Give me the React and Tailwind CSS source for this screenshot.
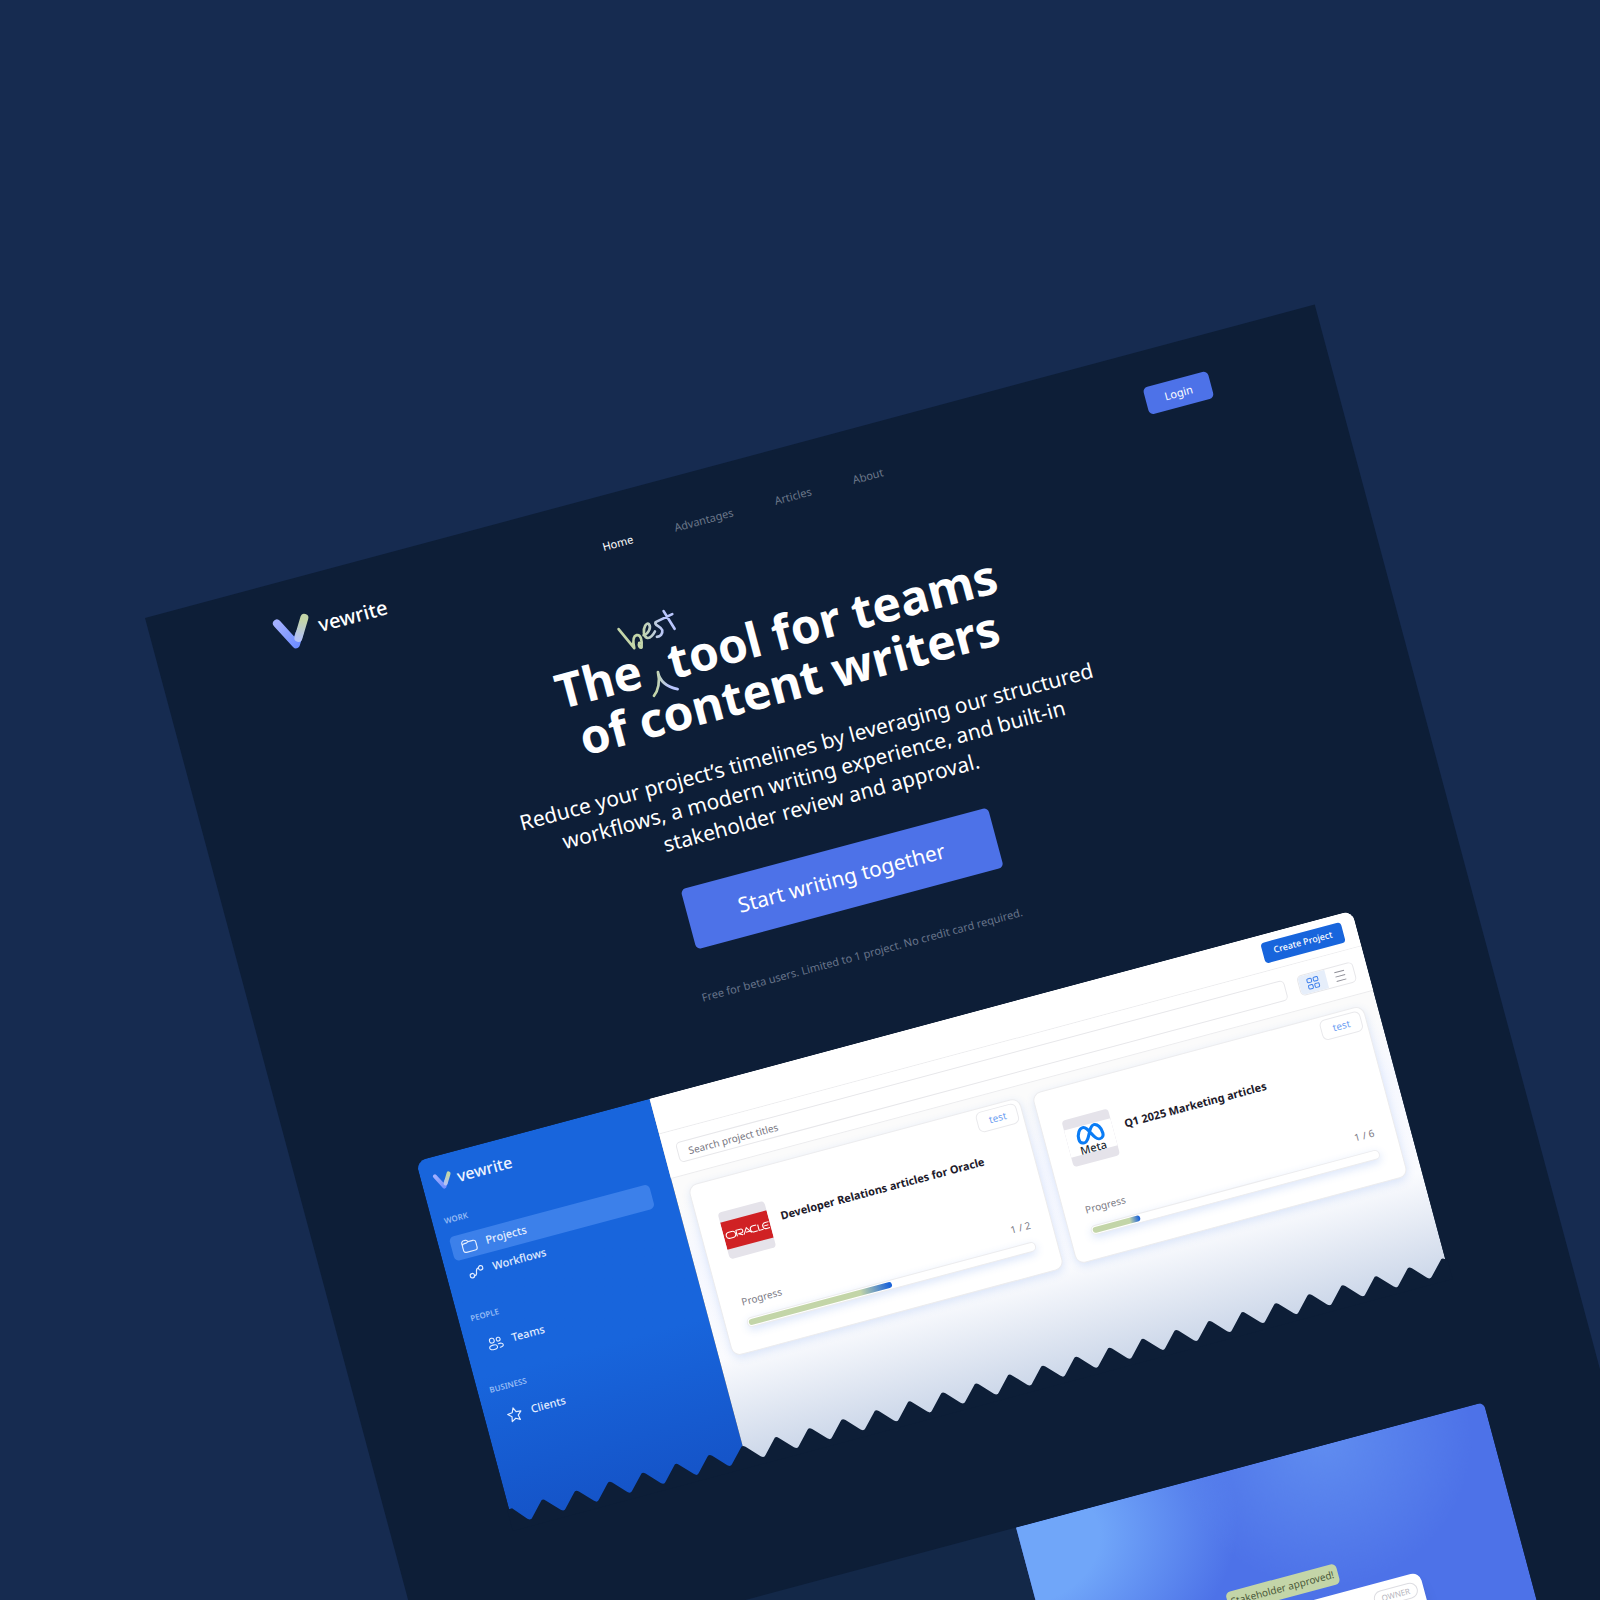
import React from "react";

function VMark({ className }) {
  return (
    <svg viewBox="0 0 38 34" className={className} aria-hidden="true" fill="none">
      <defs>
        <linearGradient id="vleft" x1="5" y1="4" x2="22" y2="32" gradientUnits="userSpaceOnUse">
          <stop offset="0" stopColor="#a3b0ff" />
          <stop offset="1" stopColor="#6b8bff" />
        </linearGradient>
        <linearGradient id="vright" x1="33" y1="4" x2="23" y2="25" gradientUnits="userSpaceOnUse">
          <stop offset="0.2" stopColor="#c3d5a8" />
          <stop offset="1" stopColor="#b4c2f2" />
        </linearGradient>
      </defs>
      <path d="M5 4.500L18 29.500L24 20" stroke="url(#vleft)" strokeWidth="8" strokeLinecap="round" strokeLinejoin="round" />
      <path d="M33 6L22 24" stroke="url(#vright)" strokeWidth="8" strokeLinecap="round" />
    </svg>
  );
}

function BestNote() {
  return (
    <svg viewBox="446 122 70 90" className="absolute -top-[74px] -left-[30px] h-[90px] w-[70px] max-w-none" fill="none" role="img" aria-label="best">
      <defs>
        <linearGradient id="ink" x1="60" y1="0" x2="165" y2="0" gradientUnits="userSpaceOnUse">
          <stop offset="0.3" stopColor="#c3d5a8" />
          <stop offset="0.95" stopColor="#b9c6fd" />
        </linearGradient>
        <linearGradient id="caret" x1="130" y1="0" x2="180" y2="0" gradientUnits="userSpaceOnUse">
          <stop offset="0.1" stopColor="#c3d5a8" />
          <stop offset="0.9" stopColor="#b9c6fd" />
        </linearGradient>
      </defs>
      <g transform="rotate(15) translate(464 -16) scale(0.3333)" strokeWidth="8" strokeLinecap="round" strokeLinejoin="round">
        <path stroke="url(#ink)" d="M23 83L70 140C66 122 66 104 77 101C90 98 94 118 92 138C86 140 82 132 85 124M98 101C112 98 122 78 114 68C106 62 97 78 99 94C101 110 112 114 122 104C128 98 130 94 132 90M184 38L134 62C128 72 150 74 154 86C156 98 148 106 138 106M158 29L191 82" />
        <path stroke="url(#caret)" d="M129 283C142 268 148 240 141 212C146 236 166 256 200 263" />
      </g>
    </svg>
  );
}

const icon = "size-4 shrink-0";
const FolderIcon = () => (
  <svg viewBox="0 0 16 16" className={icon} fill="none" stroke="currentColor" strokeWidth="1.200" strokeLinejoin="round" strokeLinecap="round" aria-hidden="true">
    <path d="M1 4.500A2.500 2.500 0 0 1 3.500 2H5.200C6 2 6.600 2.300 7 3L7.600 4H12.500A2.500 2.500 0 0 1 15 6.500V11.500A2.500 2.500 0 0 1 12.500 14H3.500A2.500 2.500 0 0 1 1 11.500ZM1 6.500C1.500 5.500 2.500 5 3.500 5H5.500L7.600 4" />
  </svg>
);
const FlowIcon = () => (
  <svg viewBox="0 0 16 16" className={icon} fill="none" stroke="currentColor" strokeWidth="1.200" strokeLinecap="round" aria-hidden="true">
    <circle cx="3" cy="11" r="2.200" />
    <circle cx="13" cy="5.500" r="2.200" />
    <path d="M5.300 11.500C8 11.800 7.500 10 8 8.200C8.400 6.500 8.500 5 10.700 5.300" />
  </svg>
);
const TeamIcon = () => (
  <svg viewBox="0 0 16 16" className={icon} fill="none" stroke="currentColor" strokeWidth="1.100" strokeLinecap="round" strokeLinejoin="round" aria-hidden="true">
    <circle cx="5" cy="4.800" r="2.400" />
    <circle cx="11.500" cy="5" r="1.900" />
    <ellipse cx="5" cy="11.700" rx="4" ry="2.300" />
    <path d="M10.500 9.500C13 9 15 10 15 11.500C15 12.800 13.500 13.500 11.500 13.400" />
  </svg>
);
const StarIcon = () => (
  <svg viewBox="0 0 16 16" className={icon} fill="none" stroke="currentColor" strokeWidth="1.200" strokeLinejoin="round" aria-hidden="true">
    <path d="M8 1.300L10 5.700L14.800 6.200L11.200 9.500L12.200 14.300L8 11.900L3.800 14.300L4.800 9.500L1.200 6.200L6 5.700Z" />
  </svg>
);

function NavItem({ label, Icon, active }) {
  return (
    <a href="#" className={`flex h-[25px] items-center gap-[9px] rounded-[5px] pl-[10px] text-[11px] font-medium text-[#e3edff] ${active ? "bg-[#3c80ea]" : ""}`}>
      <Icon />
      {label}
    </a>
  );
}

function NavGroup({ title, items }) {
  return (
    <section>
      <h2 className="text-[8px] leading-[12px] font-semibold text-[#95bbf5]">{title}</h2>
      <div className="mt-[11px] flex flex-col gap-[2px]">
        {items.map((i) => (
          <NavItem key={i.label} {...i} />
        ))}
      </div>
    </section>
  );
}

function OracleLogo() {
  return (
    <div className="flex h-7 w-full items-center justify-center bg-[#d02124]">
      <svg viewBox="0 0 48 10" preserveAspectRatio="none" className="h-[9px] w-[47px]" fill="none" stroke="#fff" strokeWidth="1.100" role="img" aria-label="Oracle">
        <path d="M5 1.600H8A3.400 3.400 0 0 1 8 8.400H5A3.400 3.400 0 0 1 5 1.600ZM12.500 8.400V1.600H17A2 2 0 0 1 17 6H14L18.500 8.400M19.500 8.400L23.500 1.600L27.500 8.400M22 6.500H26M34 1.600H30.500A3.400 3.400 0 0 0 30.500 8.400H34M35.500 1.600V8.400H40M47 1.600H43.500A3.400 3.400 0 0 0 43.500 8.400H47M41 5H46" />
      </svg>
    </div>
  );
}

function MetaLogo() {
  return (
    <div className="flex h-7 w-full flex-col items-center bg-white">
      <svg viewBox="0 0 28 20" preserveAspectRatio="none" className="h-[19px] w-[29px] shrink-0" fill="none" aria-hidden="true">
        <path d="M2 13C2 7 5 2 8.500 2C14 2 16 18 21.500 18C24.500 18 26 16 26 13C26 7 23 2 19.500 2C14 2 12 18 6.500 18C3.500 18 2 16 2 13Z" stroke="#0a7cf5" strokeWidth="3" />
      </svg>
      <span className="text-[11px] leading-[9px] font-medium text-[#1c2b33]">Meta</span>
    </div>
  );
}

function ProjectCard({ logo, title, done, total }) {
  return (
    <article className="relative rounded-[9px] border border-[#ececee] bg-white px-[21px] pt-[33px] pb-[23px] shadow-[0_3px_8px_rgba(70,125,230,0.18)]">
      <span className="absolute top-[3px] right-[4px] rounded-[6px] border border-[#e9e9ec] px-[11px] py-px text-[10px] leading-[17px] text-[#6f9ff2]">test</span>
      <div className="flex gap-3">
        <div className="flex size-12 shrink-0 items-center overflow-hidden rounded-[4px] bg-[#e5e3ea]">{logo}</div>
        <h3 className="pt-[11px] text-[11px] leading-[16px] font-bold text-[#1d1a2b]">{title}</h3>
      </div>
      <div className="mt-[37px] flex justify-between text-[10px] leading-[15px] text-[#7b7a85]">
        <span>Progress</span>
        <span>{done} / {total}</span>
      </div>
      <div className="mt-[9px] h-[10px] rounded-full border border-[#ececee] bg-white p-px shadow-[0_3px_8px_rgba(70,125,230,0.2)]">
        <div
          className="h-full rounded-full bg-[linear-gradient(90deg,#c3d5a8_78%,#1c64d9_98%)]"
          style={{ width: `${(done / total) * 100}%` }}
        />
      </div>
    </article>
  );
}

const TEETH = 28;
function tornPath() {
  let d = "M-4 30V2L3 2";
  for (let i = 0; i < TEETH; i++) {
    const x = i * 34;
    d += `L${x + 15} 16Q${x + 18} 19 ${x + 20} 16L${x + 32} 3Q${x + 34} 0 ${x + 37} 3`;
  }
  return d + "L962 2V30Z";
}

function Dashboard() {
  return (
    <div className="relative mt-[74px]">
      <div className="flex h-[376px] overflow-hidden rounded-t-[10px]">
        <aside className="w-1/4 bg-linear-to-b from-[#1865dc] from-60% to-[#1554c8] pt-[13px] pr-[23px] pl-3">
          <div className="flex items-center gap-[5px]">
            <VMark className="h-[17px] w-[19px]" />
            <span className="text-[16px] leading-[24px] font-medium text-[#eef4ff]">vewrite</span>
          </div>
          <div className="mt-[22px] flex flex-col gap-[26px]">
            <NavGroup title="WORK" items={[{ label: "Projects", Icon: FolderIcon, active: true }, { label: "Workflows", Icon: FlowIcon }]} />
            <NavGroup title="PEOPLE" items={[{ label: "Teams", Icon: TeamIcon }]} />
            <NavGroup title="BUSINESS" items={[{ label: "Clients", Icon: StarIcon }]} />
          </div>
        </aside>
        <div className="min-w-0 flex-1 bg-[linear-gradient(180deg,#fbfbfb_28%,#f6f8ff_45%,#fafbfe_72%,#ccd7e9_100%)]">
          <div className="flex h-[37px] items-center justify-end border-b border-[#ececee] bg-white px-[14px]">
            <button className="h-[21px] rounded-[4px] bg-[#1865dc] px-[11px] text-[9px] font-medium text-white">Create Project</button>
          </div>
          <div className="flex h-[46px] items-center gap-[13px] border-b border-[#ececee] bg-white px-[13px]">
            <input aria-label="Search project titles" placeholder="Search project titles" className="h-[21px] min-w-0 flex-1 rounded-[5px] border border-[#e7e7ea] px-[10px] text-[10px] placeholder:text-[#77767f]" />
            <div className="flex h-[21px] w-[58px] overflow-hidden rounded-[5px] border border-[#e7e7ea]">
              <button aria-label="Grid view" className="flex flex-1 items-center justify-center bg-[#e6eefa] text-[#3f80ec]">
                <svg viewBox="0 0 14 14" className="size-[14px]" fill="none" stroke="currentColor" aria-hidden="true">
                  <rect x="1.500" y="1.500" width="4.500" height="4" rx="1" />
                  <rect x="8" y="1.500" width="4.500" height="4" rx="1" />
                  <rect x="1.500" y="8" width="4.500" height="4" rx="1" />
                  <rect x="8" y="8" width="4.500" height="4" rx="1" />
                </svg>
              </button>
              <button aria-label="List view" className="flex flex-1 items-center justify-center text-[#8d8d96]">
                <svg viewBox="0 0 14 14" className="size-[14px]" fill="none" stroke="currentColor" aria-hidden="true">
                  <path d="M2 2.500H12M2 7H12M2 11.500H12" />
                </svg>
              </button>
            </div>
          </div>
          <div className="grid grid-cols-2 gap-[13px] px-[14px] pt-[11px]">
            <ProjectCard logo={<OracleLogo />} title="Developer Relations articles for Oracle" done={1} total={2} />
            <ProjectCard logo={<MetaLogo />} title="Q1 2025 Marketing articles" done={1} total={6} />
          </div>
        </div>
      </div>
      <svg viewBox="-2 0 959 24" preserveAspectRatio="none" className="absolute -inset-x-[2px] -bottom-[6px] h-6 w-[calc(100%+4px)] max-w-none" aria-hidden="true">
        <path d={tornPath()} fill="#0d1e37" />
      </svg>
    </div>
  );
}

export default function App() {
  return (
    <div className="h-screen overflow-hidden bg-[#162b50] pt-[618px] pr-[244px] pl-[145px] font-['Noto_Sans',sans-serif]">
      <main className="h-[1500px] origin-top-left -rotate-15 bg-[#0d1e37] px-[121px] text-white">
        <header className="grid grid-cols-[1fr_auto_1fr] items-center pt-[31px]">
          <a href="#" className="flex items-center gap-[7px] pt-1">
            <VMark className="h-[34px] w-[38px]" />
            <span className="text-[20px] leading-[30px] font-medium">vewrite</span>
          </a>
          <nav className="flex gap-[43px] text-[11px] text-[#6b7789]">
            <a href="#" className="text-white">Home</a>
            <a href="#">Advantages</a>
            <a href="#">Articles</a>
            <a href="#">About</a>
          </nav>
          <button className="h-7 justify-self-end rounded-[5px] bg-[#4d72e8] px-[19px] text-[11px]">Login</button>
        </header>

        <section className="flex flex-col items-center pt-[83px] text-center">
          <h1 className="text-[48px] leading-[51px] font-bold">
            The <span className="relative inline-block w-4"><BestNote /></span>tool for teams
            <br />
            of content writers
          </h1>
          <p className="mt-[27px] w-[620px] text-[21px] leading-[29px]">
            Reduce your project’s timelines by leveraging our structured workflows, a modern writing experience, and built-in stakeholder review and approval.
          </p>
          <button className="mt-[33px] h-[62px] w-[318px] rounded-[5px] bg-[#4d72e8] text-[21px]">Start writing together</button>
          <p className="mt-[38px] text-[11px] leading-[20px] text-[#67748a]">Free for beta users. Limited to 1 project. No credit card required.</p>
        </section>

        <Dashboard />

        <section className="mt-[133px] grid h-[380px] grid-cols-2 overflow-hidden rounded-[6px] bg-[#132848]">
          <div />
          <div className="bg-[radial-gradient(circle_at_66%_-2%,#608df0_0,transparent_150px),radial-gradient(ellipse_at_0%_5%,#70a6f9_80px,transparent_220px)] bg-[#4d72e8] px-[106px] pt-[116px]">
            <div className="relative mt-[31px] h-[200px] rounded-[9px] bg-white py-2 pr-[6px] shadow-lg">
              <span className="absolute -top-[30px] left-[79px] rounded-[5px] bg-[#c3d5a8] px-1 text-[10px] leading-[21px] whitespace-nowrap text-[#4b5a3a]">Stakeholder approved!</span>
              <span className="float-right rounded-full border border-[#dddde2] px-[7px] text-[8px] leading-[14px] text-[#b5b5bd]">OWNER</span>
            </div>
          </div>
        </section>
      </main>
    </div>
  );
}
